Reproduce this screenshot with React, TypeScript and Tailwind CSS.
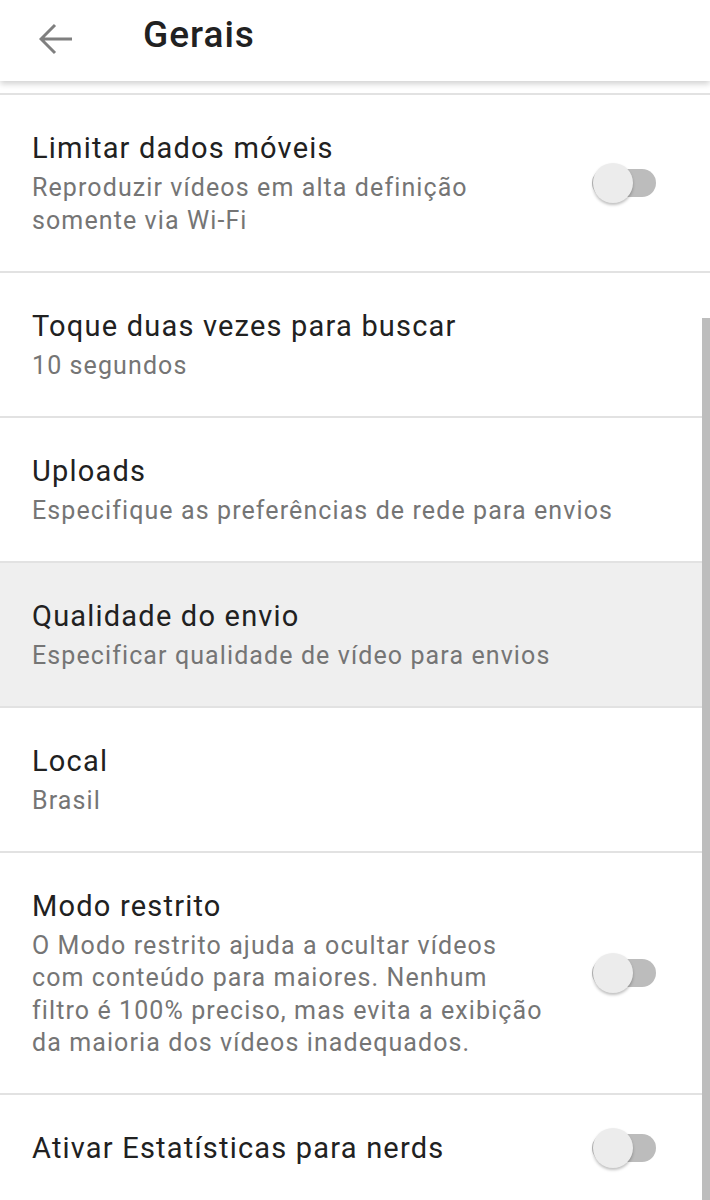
import React from "react";

type Item = {
  title: string;
  lines?: string[];
  toggle?: boolean;
  active?: boolean;
};

const items: Item[] = [
  {
    title: "Limitar dados móveis",
    lines: ["Reproduzir vídeos em alta definição", "somente via Wi-Fi"],
    toggle: true,
  },
  { title: "Toque duas vezes para buscar", lines: ["10 segundos"] },
  { title: "Uploads", lines: ["Especifique as preferências de rede para envios"] },
  {
    title: "Qualidade do envio",
    lines: ["Especificar qualidade de vídeo para envios"],
    active: true,
  },
  { title: "Local", lines: ["Brasil"] },
  {
    title: "Modo restrito",
    lines: [
      "O Modo restrito ajuda a ocultar vídeos",
      "com conteúdo para maiores. Nenhum",
      "filtro é 100% preciso, mas evita a exibição",
      "da maioria dos vídeos inadequados.",
    ],
    toggle: true,
  },
  { title: "Ativar Estatísticas para nerds", toggle: true },
];

function Toggle() {
  return (
    <div className="relative w-[64px] h-[28px] rounded-full bg-[#bcbcbc] shrink-0">
      {/* thumb */}
      <div className="absolute left-[1px] top-[-6px] w-10 h-10 rounded-full bg-[#ececec] shadow-[0_2px_3px_rgba(0,0,0,0.25)]" />
    </div>
  );
}

function Row({ item }: { item: Item }) {
  return (
    <div
      className={`flex items-center border-t-2 border-[#e2e2e2] pl-8 pr-[54px] pt-[33px] pb-[33.5px] ${
        item.active ? "bg-[#efefef]" : "bg-white"
      }`}
    >
      <div className="flex-1 min-w-0">
        <div className="text-[29px] leading-[40px] tracking-[1.2px] text-[#212121]">{item.title}</div>
        {item.lines && (
          <div className="mt-1 text-[25px] leading-[32.5px] tracking-[1.1px] text-[#757575]">
            {item.lines.map((l) => (
              <div key={l} className="whitespace-nowrap">
                {l}
              </div>
            ))}
          </div>
        )}
      </div>
      {item.toggle && <Toggle />}
    </div>
  );
}

export default function App() {
  return (
    <div className="relative w-full h-[1200px] overflow-hidden bg-white font-['Roboto',sans-serif]">
      {/* Header */}
      <header className="relative z-10 h-[81px] flex items-center bg-white shadow-[0_3px_6px_rgba(0,0,0,0.18)]">
        <svg width="34" height="32" viewBox="0 0 34 32" className="ml-[39px] mt-[-4px]" fill="none">
          <path d="M2 16H33M16 2L2 16L16 30" stroke="#7f7f7f" strokeWidth="3" />
        </svg>
        <h1 className="ml-[70px] text-[37px] font-medium tracking-[1px] text-[#212121] mt-[-11px]">Gerais</h1>
      </header>

      <div className="h-3" />

      {items.map((item) => (
        <Row key={item.title} item={item} />
      ))}

      {/* scrollbar */}
      <div className="absolute right-0 top-[318px] bottom-0 w-2 bg-[#bdbdbd]" />
    </div>
  );
}
